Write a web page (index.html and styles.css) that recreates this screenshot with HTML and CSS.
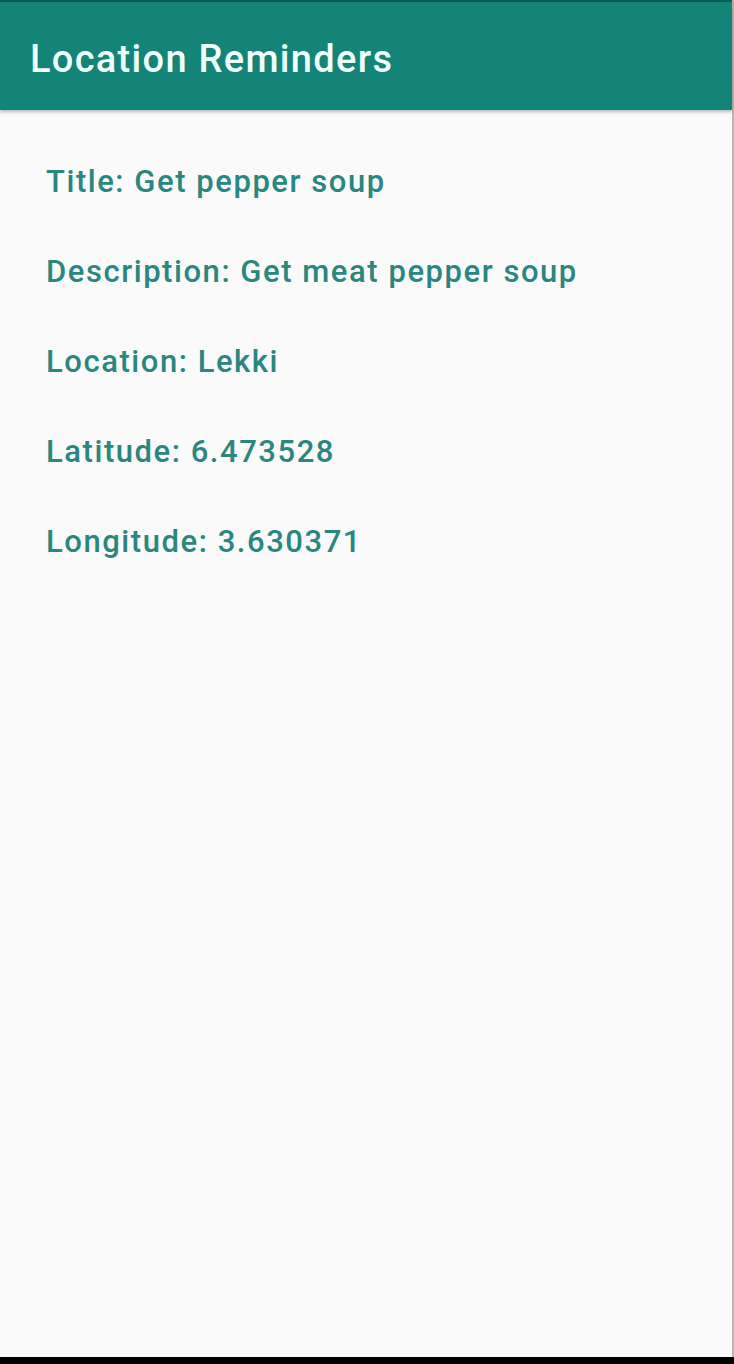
FILE: index.html
```html
<!DOCTYPE html>
<html>
<head>
<meta charset="utf-8">
<link rel="stylesheet" href="styles.css">
</head>
<body>
<div class="screen">
  <header class="appbar">
    <h1 class="appbar-title">Location Reminders</h1>
  </header>
  <main class="details">
    <p class="detail">Title: Get pepper soup</p>
    <p class="detail">Description: Get meat pepper soup</p>
    <p class="detail">Location: Lekki</p>
    <p class="detail">Latitude: 6.473528</p>
    <p class="detail">Longitude: 3.630371</p>
  </main>
</div>
</body>
</html>
```
FILE: styles.css
```css
html, body {
  margin: 0;
  padding: 0;
}
body {
  width: 734px;
  height: 1364px;
  overflow: hidden;
  background: #000;
  font-family: Roboto, "Noto Sans", sans-serif;
}
.screen {
  width: 732px;
  height: 1357px;
  background: #fafafa;
  border-right: 2px solid #b8b8b8;
  display: flex;
  flex-direction: column;
}
.appbar {
  background: #138477;
  border-top: 2px solid #0d5c53;
  box-shadow: 0 2px 3px rgba(0,0,0,0.25);
  display: flex;
  align-items: center;
  padding: 6px 0 0 30px;
  box-sizing: border-box;
  height: 110px;
  flex-shrink: 0;
}
.appbar-title {
  margin: 0;
  color: #effffb;
  font-size: 38px;
  line-height: 44px;
  font-weight: 500;
  letter-spacing: 1.3px;
}
.details {
  padding: 54px 46px 0;
  display: flex;
  flex-direction: column;
}
.detail {
  margin: 0;
  height: 90px;
  line-height: 36px;
  color: #2a8780;
  font-size: 31px;
  font-weight: 500;
  letter-spacing: 1.55px;
}
```
